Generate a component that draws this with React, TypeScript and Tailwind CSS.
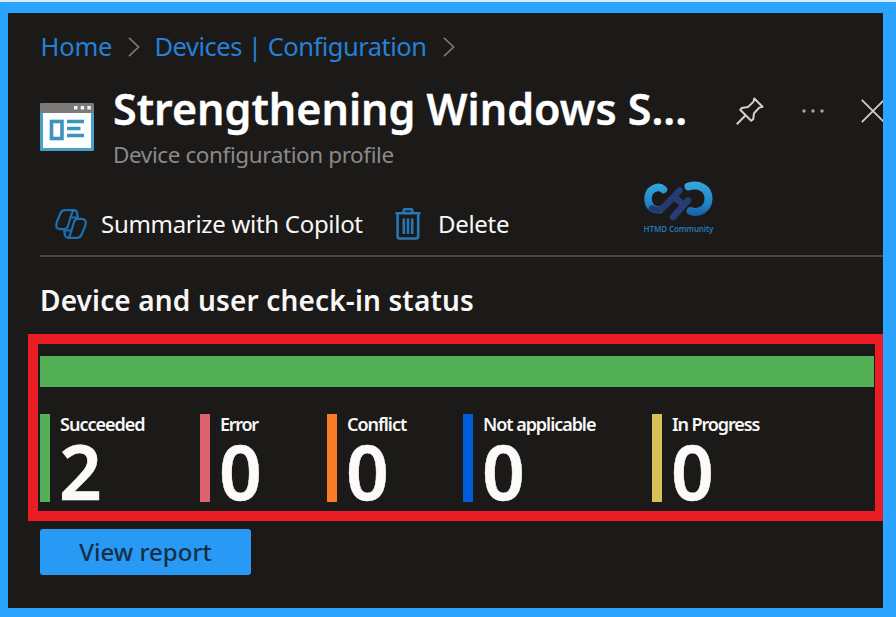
import React from "react";

type Stat = { label: string; value: number; color: string; width: string; tracking: string };

const stats: Stat[] = [
  { label: "Succeeded", value: 2, color: "bg-[#54b054]", width: "w-[160px]", tracking: "tracking-[-1px]" },
  { label: "Error", value: 0, color: "bg-[#dc626d]", width: "w-[127px]", tracking: "tracking-[-1.300px]" },
  { label: "Conflict", value: 0, color: "bg-[#fa7a2a]", width: "w-[136px]", tracking: "tracking-[-1px]" },
  { label: "Not applicable", value: 0, color: "bg-[#015cda]", width: "w-[189px]", tracking: "tracking-[-1.050px]" },
  { label: "In Progress", value: 0, color: "bg-[#dac157]", width: "w-[160px]", tracking: "tracking-[-1.100px]" },
];

function Chevron() {
  return (
    <svg className="h-5 w-3 shrink-0" viewBox="0 0 12 20" fill="none" stroke="#7d7b79" strokeWidth="1.6">
      <path d="M1 .8 10.6 10 1 19.2" />
    </svg>
  );
}

function ProfileIcon() {
  return (
    <svg className="h-12 w-[54px] shrink-0" viewBox="0 0 54 48">
      <rect width="54" height="48" rx="1.5" fill="#4a9fc8" />
      <path d="M0 10V1.5Q0 0 1.5 0h51Q54 0 54 1.5V10Z" fill="#7c7b7a" />
      <rect x="3" y="10" width="48" height="35" fill="#fcfeff" />
      <path d="M34 3h3.500v3.500H34zM40.700 3h3.500v3.500h-3.500zM47.300 3h3.500v3.500h-3.500z" fill="#f2f2f2" />
      <rect x="11.500" y="18.500" width="10.500" height="17" fill="#fff" stroke="#3e93bd" strokeWidth="3.600" />
      <path d="M27 18.500h17M27 25.500h13.500M27 32.500h17" stroke="#3e93bd" strokeWidth="3.600" />
    </svg>
  );
}

function PinIcon() {
  return (
    <svg className="h-7 w-7 shrink-0" viewBox="0 0 28 28" fill="none" stroke="#d4d2d0" strokeWidth="2" strokeLinejoin="round">
      <path d="M18.300 1.500 26.500 9.700 23.300 10.600 18 16.300 17.200 22.300 15.200 23.800 4.200 12.800 5.900 10.900 11.900 10.100 17.500 4.600Z" />
      <path d="M9.600 18.300.8 27.200" />
    </svg>
  );
}

function CopilotIcon() {
  return (
    <svg className="h-[30px] w-8 shrink-0" viewBox="0 0 32 30" fill="none" stroke="#1c70b2" strokeWidth="2.200" strokeLinejoin="round">
      <path d="M22.800 8.500 22 3.500Q21.200 1.200 19 1.200H9.800Q6.800 1.200 5.400 4.500L2 12.500Q-.4 19.800 5 20.200H9.300Q12 20.200 13 17L16.500 5.200Q17.500 1.800 19.500 1.200" />
      <path d="M9.200 21.500 10 26.500Q10.800 28.800 13 28.800H22.200Q25.200 28.800 26.600 25.500L30 17.500Q32.400 10.200 27 9.800H22.700Q20 9.800 19 13L15.500 24.800Q14.500 28.200 12.500 28.800" />
      <path d="M15.500 8.500H23.500M8.500 21.500H16.500" />
    </svg>
  );
}

function TrashIcon() {
  return (
    <svg className="h-8 w-[26px] shrink-0" viewBox="0 0 26 32" fill="none" stroke="#2776b5" strokeWidth="2.600">
      <path d="M.5 5.200h25M8.800 5V2.300Q8.800 1.300 10 1.300h6Q17.200 1.300 17.200 2.300V5" />
      <path d="M2.600 5.500V28.300Q2.600 30.500 4.800 30.500H20.800Q23.200 30.500 23.200 28.300V5.500" />
      <path d="M8.800 10.500v15.500M13 10.500v15.500M17.200 10.500v15.500" strokeWidth="2.600" />
    </svg>
  );
}

function CommunityLogo() {
  return (
    <div className="absolute left-[635px] top-[168px] flex w-[71px] flex-col items-center">
      <svg className="h-10 w-[69px]" viewBox="0 0 69 40" fill="none" strokeLinecap="round">
        <defs>
          <linearGradient id="ring" x1="0" y1="0" x2="0" y2="40" gradientUnits="userSpaceOnUse">
            <stop stopColor="#36a9df" />
            <stop offset=".5" stopColor="#2389cb" />
            <stop offset="1" stopColor="#134f9b" />
          </linearGradient>
        </defs>
        <path d="M19.500 8.500C14.500 4 4.200 7.500 4 17.500 4 26 10 30 16 28.500" stroke="url(#ring)" strokeWidth="7.500" />
        <path d="M44.500 5.500C54.500 2.500 64.500 7 64.500 17.500 64.500 28 55 33 46.500 30" stroke="url(#ring)" strokeWidth="8" />
        <path d="M8 27.500C13 30.500 17.500 28.500 21.500 24.500L35.500 9.500" stroke="#243a73" strokeWidth="6.500" />
        <path d="M29 36 44 19.500M31 16.500 39.500 24" stroke="#263c75" strokeWidth="6.500" />
      </svg>
      <span className="mt-px whitespace-nowrap text-[8px] font-semibold leading-[14px] tracking-[-0.12px] text-[#2376b8]">HTMD Community</span>
    </div>
  );
}

export default function App() {
  return (
    <div className="h-[617px] w-[896px] overflow-hidden border-t-2 border-[#dcecf7] bg-[#2ba3ff] pl-[8px] pt-[11px] font-['Noto_Sans','Open_Sans',sans-serif]">
      <main className="relative flex h-[595px] w-[875px] flex-col overflow-hidden bg-[#1b1a19] text-[#f8f7f6]">
        <nav className="flex h-[67px] shrink-0 items-center pl-[32.500px] text-[25.500px] text-[#2580d8]">
          <a className="w-[72px] whitespace-nowrap tracking-[-0.200px]">Home</a>
          <span className="ml-[15px] flex"><Chevron /></span>
          <a className="ml-[15px] w-[273px] whitespace-nowrap tracking-[-0.500px]">Devices | Configuration</a>
          <span className="ml-[15px] flex"><Chevron /></span>
        </nav>

        <header className="flex h-[95px] shrink-0 pl-[32px]">
          <span className="mt-[23px] shrink-0"><ProfileIcon /></span>
          <div className="ml-[19px] w-[590px] shrink-0">
            <h1 className="h-[58px] whitespace-nowrap text-[43px] font-semibold leading-[58px] text-white [-webkit-text-stroke:0.4px_white]">Strengthening Windows S...</h1>
            <p className="whitespace-nowrap text-[22.500px] leading-[34px] tracking-[-0.400px] text-[#8b8988]">Device configuration profile</p>
          </div>
          <span className="ml-[33px] mt-[17px] shrink-0"><PinIcon /></span>
          <svg className="ml-[38px] mt-[29px] h-1 w-[22px] shrink-0" viewBox="0 0 22 4" fill="#a5a3a1">
            <circle cx="2" cy="2" r="1.700" /><circle cx="11" cy="2" r="1.700" /><circle cx="20" cy="2" r="1.700" />
          </svg>
          <svg className="ml-[37px] mt-[19px] h-6 w-6 shrink-0" viewBox="0 0 24 24" stroke="#d0cecc" strokeWidth="1.800">
            <path d="m.8.8 22.400 22.400M.8 23.200 23.200.8" />
          </svg>
        </header>

        <div className="ml-[32px] flex h-[82px] shrink-0 items-center border-b-2 border-[#484644] pl-[15px] pt-[18px] text-[24px]">
          <CopilotIcon />
          <span className="ml-[14px] w-[263px] whitespace-nowrap tracking-[-0.3px]">Summarize with Copilot</span>
          <span className="ml-[31px] flex"><TrashIcon /></span>
          <span className="ml-[17px] whitespace-nowrap tracking-[-0.3px]">Delete</span>
        </div>

        <h2 className="ml-[32px] h-[77px] shrink-0 whitespace-nowrap pt-[23px] text-[28px] font-semibold leading-[40px] tracking-[0.150px]">Device and user check-in status</h2>

        <section className="ml-[20px] h-[187px] shrink-0 border-y-[10px] border-l-[10px] border-r-8 border-[#ea1c24] pl-[2px] pr-px pt-[12px]">
          <div className="h-[31px] bg-[#54b054]" />
          <div className="mt-[27px] flex h-[88px]">
            {stats.map((s) => (
              <div key={s.label} className={`flex shrink-0 ${s.width}`}>
                <div className={`w-[10px] shrink-0 ${s.color}`} />
                <div className="ml-[10px]">
                  <div className={`h-[21px] whitespace-nowrap text-[18px] font-semibold leading-[21px] ${s.tracking}`}>{s.label}</div>
                  <div className="-ml-px text-[75px] font-semibold leading-[72px] text-[#fcfbfa] [-webkit-text-stroke:0.5px_#fcfbfa]">{s.value}</div>
                </div>
              </div>
            ))}
          </div>
        </section>

        <button className="ml-[32px] mt-[8px] h-[46px] w-[211px] shrink-0 whitespace-nowrap rounded-[3px] bg-[#2899f5] text-[24px] font-medium leading-[44px] text-[#152f47]">View report</button>

        <CommunityLogo />
      </main>
    </div>
  );
}
